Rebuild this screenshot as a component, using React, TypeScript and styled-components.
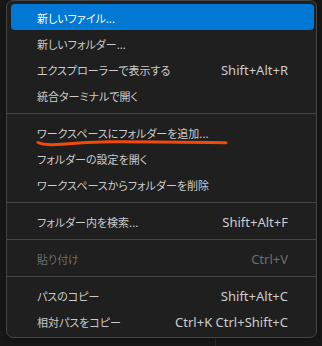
import React from "react";
import styled, { createGlobalStyle } from "styled-components";

const GlobalStyle = createGlobalStyle`
  html, body { margin: 0; padding: 0; background: #181818; }
  body { width: 322px; height: 346px; overflow: hidden; font-family: "Noto Sans", "Noto Sans CJK JP", sans-serif; }
`;

const Page = styled.div`
  position: relative;
  width: 322px;
  height: 346px;
  display: flex;
  background: #181818;
`;

const SidePane = styled.div`
  width: 215px;
  border-right: 1px solid #2b2b2b;
  background: #181818;
`;

const EditorPane = styled.div`
  flex: 1;
  background: #181818;
`;

const Menu = styled.div`
  position: absolute;
  left: 6px;
  top: 0;
  width: 311px;
  box-sizing: border-box;
  background: #1f1f1f;
  border: 1px solid #454545;
  border-radius: 7px;
  padding: 3px 2px 3px 4px;
  box-shadow: 0 2px 8px rgba(0, 0, 0, 0.36);
`;

const Item = styled.div<{ $selected?: boolean; $disabled?: boolean }>`
  height: 26px;
  box-sizing: border-box;
  padding: 2px 26px 0;
  display: flex;
  align-items: center;
  justify-content: space-between;
  border-radius: 4px;
  background: ${(p) => (p.$selected ? "#0078d4" : "transparent")};
  color: ${(p) => (p.$selected ? "#ffffff" : p.$disabled ? "#6e6e6e" : "#cccccc")};
`;

const Label = styled.span`
  font-family: "Noto Sans CJK JP", sans-serif;
  font-size: 11px;
  font-feature-settings: "palt";
  line-height: 24px;
  white-space: nowrap;
`;

const Shortcut = styled.span`
  font-family: "Noto Sans", sans-serif;
  font-size: 13px;
  line-height: 24px;
  white-space: nowrap;
`;

const Separator = styled.div`
  height: 1px;
  margin: 5px -2px 5px -4px;
  background: #454545;
`;

const Scribble = styled.svg`
  position: absolute;
  left: 0;
  top: 0;
  pointer-events: none;
`;

type Entry = { label: string; shortcut?: string; selected?: boolean; disabled?: boolean } | "sep";

const entries: Entry[] = [
  { label: "新しいファイル...", selected: true },
  { label: "新しいフォルダー..." },
  { label: "エクスプローラーで表示する", shortcut: "Shift+Alt+R" },
  { label: "統合ターミナルで開く" },
  "sep",
  { label: "ワークスペースにフォルダーを追加..." },
  { label: "フォルダーの設定を開く" },
  { label: "ワークスペースからフォルダーを削除" },
  "sep",
  { label: "フォルダー内を検索...", shortcut: "Shift+Alt+F" },
  "sep",
  { label: "貼り付け", shortcut: "Ctrl+V", disabled: true },
  "sep",
  { label: "パスのコピー", shortcut: "Shift+Alt+C" },
  { label: "相対パスをコピー", shortcut: "Ctrl+K Ctrl+Shift+C" },
];

export default function App() {
  return (
    <>
      <GlobalStyle />
      <Page>
        <SidePane />
        <EditorPane />
        <Menu>
          {entries.map((e, i) =>
            e === "sep" ? (
              <Separator key={i} />
            ) : (
              <Item key={i} $selected={e.selected} $disabled={e.disabled}>
                <Label>{e.label}</Label>
                {e.shortcut && <Shortcut>{e.shortcut}</Shortcut>}
              </Item>
            )
          )}
        </Menu>
        <Scribble width="322" height="346" viewBox="0 0 322 346">
          <path
            d="M38 142.5 C 44 145.5, 52 145, 62 144.2 C 75 143.2, 92 142.2, 110 141.8 C 140 141.6, 190 142.2, 226 142.8"
            fill="none"
            stroke="#f24a0a"
            strokeWidth="3"
            strokeLinecap="round"
          />
        </Scribble>
      </Page>
    </>
  );
}
